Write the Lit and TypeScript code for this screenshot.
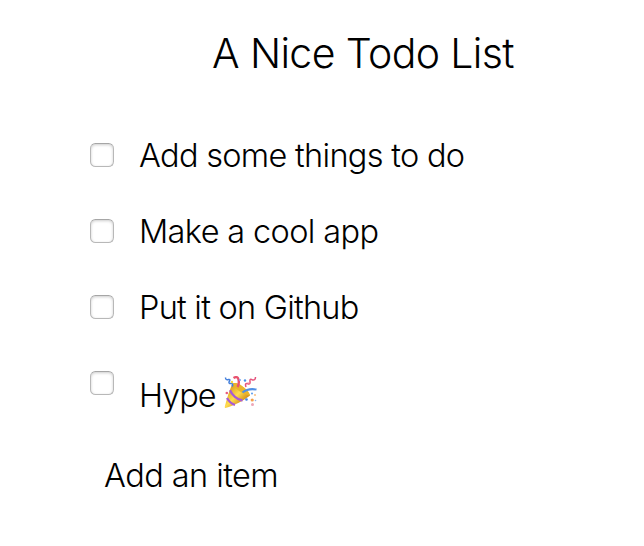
import { LitElement, html, css, svg } from "lit";
import { customElement, property } from "lit/decorators.js";

@customElement("party-popper")
class PartyPopper extends LitElement {
  static styles = css`
    :host { display: block; width: 33px; height: 33px; }
    svg { display: block; }
  `;
  render() {
    const dots = [
      [21, 4.5, "#4a90e8", 1.2], [24.5, 7.5, "#ef7f93", 1.1], [8, 6, "#f7d84a", 1.2],
      [28, 17.5, "#5b9bee", 1], [22.5, 23.5, "#3f83ea", 1.3], [28.2, 24, "#f5a04b", 1.6],
      [31, 19, "#f9c48c", 1.1], [28.5, 28.5, "#eda6b8", 1.5], [2.8, 17, "#ea5a7c", 1.3],
      [31.5, 24.5, "#8bb6f0", 0.8], [16, 4, "#7ba9ef", 1],
    ] as const;
    return html`<svg width="33" height="33" viewBox="0 0 33 33" fill="none">
      <defs>
        <linearGradient id="cone" x1="6" y1="12" x2="20" y2="26" gradientUnits="userSpaceOnUse">
          <stop offset="0" stop-color="#dfa21f" /><stop offset=".5" stop-color="#ffdc50" /><stop offset="1" stop-color="#d08a14" />
        </linearGradient>
      </defs>
      <path d="M8.500 7.500C13 4.500 25 14 26 19.500C20 24.500 10 29.500 1.500 32Q.5 32 .8 30.500C3 22 5.500 14 8.500 7.500Z" fill="url(#cone)" />
      <path d="M8.500 7.500C13 4.500 25 14 26 19.500C21 19 11 14 8.500 7.500Z" fill="#e9b52c" />
      <path d="M6 14.200C8 19 13 23.500 18.500 24.500M3 22C5 25.500 7.500 28 11 28.800" stroke="#a75bd6" stroke-width="2.300" />
      <path d="M1.500 1.500Q1.500 4.500 4.500 3.500Q7 3 5 6Q4.500 8 7.500 7.500Q9.500 8 8 10.500" stroke="#4580dc" stroke-width="1.500" />
      <path d="M9.500 2Q13.500-.5 14.500 3.500Q15.500 8 13.500 11" stroke="#e85370" stroke-width="2.400" />
      <path d="M22 11Q20.500 7 23.500 7.500Q26.500 9 26 5.500Q25.500 2 28.500 4Q31.500 4.500 31.500 1" stroke="#e5537c" stroke-width="1.500" />
      <path d="M18.500 16.500Q24 12 32.500 13.500" stroke="#4f8fe5" stroke-width="2" />
      ${dots.map(([x, y, c, r]) => svg`<circle cx=${x} cy=${y} r=${r} fill=${c} />`)}
    </svg>`;
  }
}

@customElement("todo-item")
class TodoItem extends LitElement {
  @property() label = "";
  @property({ type: Boolean }) party = false;
  static styles = css`
    :host { display: flex; height: 76px; align-items: flex-start; }
    .box {
      appearance: none; box-sizing: border-box; flex: none; width: 24px; height: 24px;
      margin: 0 25px 0 0; border: 1px solid #b8b8b8; border-top-color: #a6a6a6; border-radius: 5.500px;
      background: #fff; box-shadow: inset 0 1px 3px rgba(0, 0, 0, .2);
    }
    .label { display: flex; line-height: 40px; margin-top: -7px; white-space: pre; }
    .party { margin-top: 5px; }
    party-popper { margin: 0 0 0 9px; }
  `;
  render() {
    return html`<input class="box" type="checkbox" aria-label=${this.label} />
      <div class="label ${this.party ? "party" : ""}"><span>${this.label}</span>${this.party ? html`<party-popper></party-popper>` : ""}</div>`;
  }
}

@customElement("app-root")
class AppRoot extends LitElement {
  static styles = css`
    :host {
      display: block; box-sizing: border-box; height: 546px; padding: 28px 0 0 90px; background: #fff; color: #000;
      font: 300 32.500px/40px Inter, "Liberation Sans", sans-serif; overflow: hidden;
    }
    h1 {
      margin: 0 0 65px; padding-left: 122px; font-size: 41px; font-weight: 300; line-height: 50px;
      letter-spacing: -.62px; white-space: nowrap;
    }
    .things { letter-spacing: -.7px; }
    .cool { letter-spacing: -.64px; }
    .github { letter-spacing: -.76px; }
    .hype { letter-spacing: -1.050px; }
    .add { margin-top: 9px; padding-left: 14px; letter-spacing: -.56px; }
  `;
  render() {
    return html`<h1>A Nice Todo List</h1>
      <todo-item class="things" label="Add some things to do"></todo-item>
      <todo-item class="cool" label="Make a cool app"></todo-item>
      <todo-item class="github" label="Put it on Github"></todo-item>
      <todo-item class="hype" label="Hype" party></todo-item>
      <div class="add">Add an item</div>`;
  }
}
